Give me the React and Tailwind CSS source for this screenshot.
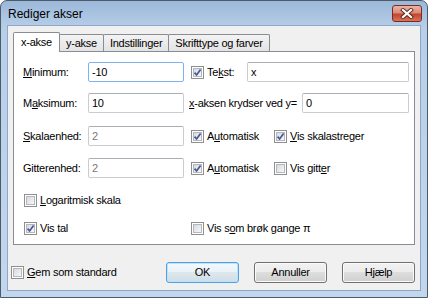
const Check = ({ checked }) => (
  <span className="relative flex w-[13px] h-[13px] shrink-0 border border-[#8f8f8f] bg-white p-px">
    <span className="flex-1 border border-[#b4b8be] bg-[linear-gradient(135deg,#d6d9dd,#f8f8f8)]" />
    {checked && (
      <svg className="absolute left-[1px] top-[1px]" width="9" height="9" viewBox="0 0 9 9">
        <path d="M1.6 4.6 L3.6 7 L7.6 1.6" stroke="#44579a" strokeWidth="1.7" fill="none" />
      </svg>
    )}
  </span>
)

const Field = ({ className, value, focus, disabled }) => (
  <div
    className={`h-[20px] flex items-center pl-[3px] rounded-[2px] border bg-white ${
      focus ? 'border-[#7eb4ea]' : 'border-[#c9ccd1] border-t-[#abadb3]'
    } ${disabled ? 'text-[#7a7a7a]' : 'text-black'} ${className}`}
  >
    {value}
  </div>
)

const Button = ({ children, primary }) => (
  <button
    className={`w-[73px] h-[21px] rounded-[3px] border text-black ${
      primary
        ? 'border-[#4ea0e6] shadow-[inset_0_0_0_1px_#bfe3f8] bg-[linear-gradient(to_bottom,#f4f9fc,#eaf2f7_50%,#dde8ee_50%,#d0dde5)]'
        : 'border-[#707070] shadow-[inset_0_0_0_1px_#fbfbfb] bg-[linear-gradient(to_bottom,#f2f2f2,#ebebeb_50%,#dddddd_50%,#cfcfcf)]'
    }`}
  >
    {children}
  </button>
)

const Tab = ({ children, active }) =>
  active ? (
    <div className="relative z-10 -mb-px h-[20px] w-[47px] flex items-center justify-center border border-b-0 border-[#898c95] bg-white rounded-t-[2px]">
      {children}
    </div>
  ) : (
    <div className="h-[17px] -ml-px flex items-center px-[6px] border border-b-0 border-[#898c95] bg-[linear-gradient(to_bottom,#f3f3f3,#e3e3e3)] rounded-t-[2px]">
      {children}
    </div>
  )

export default function App() {
  return (
    <div className="w-[428px] h-[298px] flex flex-col rounded-t-[7px] border border-[#4d5a68] bg-[linear-gradient(to_bottom,#9bb8d9,#b8cfe9_28px,#c2d7ee)] font-['Liberation_Sans',Arial,sans-serif] text-[11px] tracking-[-0.25px] text-black">
      {/* title bar */}
      <div className="h-[25px] flex items-start pl-[7px] pr-[5px]">
        <span className="mt-[5px] text-[12px] tracking-normal leading-[16px]">Rediger akser</span>
        <div className="ml-auto mt-[4px] w-[30px] h-[17px] flex items-center justify-center rounded-[3px] border border-[#7a2c22] bg-[linear-gradient(to_bottom,#eab4a6,#d98b78_45%,#c5452d_55%,#d8735a)]">
          <svg width="14" height="11" viewBox="0 0 14 11">
            <path d="M3 2 L11 9 M11 2 L3 9" stroke="#5b2a22" strokeWidth="4" strokeLinecap="square" />
            <path d="M3 2 L11 9 M11 2 L3 9" stroke="#ffffff" strokeWidth="2.2" strokeLinecap="square" />
          </svg>
        </div>
      </div>

      {/* client area */}
      <div className="mx-[7px] h-[264px] flex flex-col bg-[#f0f0f0] shadow-[0_0_0_1px_#8ea7c4]">
        <div className="px-[5px] pt-[6px]">
          <div className="flex items-end">
            <Tab active>x-akse</Tab>
            <Tab>y-akse</Tab>
            <Tab>Indstillinger</Tab>
            <Tab>Skrifttype og farver</Tab>
          </div>
          <div className="h-[194px] border border-[#898c95] bg-white flex flex-col pl-[9px]">
            <div className="mt-[10px] h-[20px] flex items-center">
              <span className="w-[65px]"><u className="underline underline-offset-1">M</u>inimum:</span>
              <Field className="w-[96px]" value="-10" focus />
              <div className="ml-[7px] w-[56px] flex items-center">
                <Check checked />
                <span className="ml-[3px]">Te<u className="underline underline-offset-1">k</u>st:</span>
              </div>
              <Field className="w-[162px]" value="x" />
            </div>

            <div className="mt-[11px] h-[20px] flex items-center">
              <span className="w-[65px]">M<u className="underline underline-offset-1">a</u>ksimum:</span>
              <Field className="w-[96px]" value="10" />
              <span className="ml-[5px] w-[113px]"><u className="underline underline-offset-1">x</u>-aksen krydser ved y=</span>
              <Field className="w-[107px]" value="0" />
            </div>

            <div className="mt-[13px] h-[20px] flex items-center">
              <span className="w-[65px]"><u className="underline underline-offset-1">S</u>kalaenhed:</span>
              <Field className="w-[96px]" value="2" disabled />
              <div className="ml-[7px] w-[83px] flex items-center">
                <Check checked />
                <span className="ml-[3px]">A<u className="underline underline-offset-1">u</u>tomatisk</span>
              </div>
              <div className="flex items-center">
                <Check checked />
                <span className="ml-[3px]"><u className="underline underline-offset-1">V</u>is skalastreger</span>
              </div>
            </div>

            <div className="mt-[12px] h-[20px] flex items-center">
              <span className="w-[65px]">Gitterenhed:</span>
              <Field className="w-[96px]" value="2" disabled />
              <div className="ml-[7px] w-[83px] flex items-center">
                <Check checked />
                <span className="ml-[3px]">A<u className="underline underline-offset-1">u</u>tomatisk</span>
              </div>
              <div className="flex items-center">
                <Check />
                <span className="ml-[3px]">Vis gitt<u className="underline underline-offset-1">e</u>r</span>
              </div>
            </div>

            <div className="mt-[12px] h-[20px] flex items-center pl-px">
              <Check />
              <span className="ml-[3px]"><u className="underline underline-offset-1">L</u>ogaritmisk skala</span>
            </div>

            <div className="mt-[8px] h-[20px] flex items-center pl-px">
              <div className="w-[167px] flex items-center">
                <Check checked />
                <span className="ml-[3px]">Vis tal</span>
              </div>
              <Check />
              <span className="ml-[3px]">Vis s<u className="underline underline-offset-1">o</u>m brøk gange π</span>
            </div>
          </div>
        </div>

        <div className="mt-[17px] h-[21px] flex items-center pl-[3px] pr-[5px]">
          <Check />
          <span className="ml-[3px]"><u className="underline underline-offset-1">G</u>em som standard</span>
          <div className="ml-auto flex gap-[15px]">
            <Button primary>OK</Button>
            <Button>Annuller</Button>
            <Button>Hjælp</Button>
          </div>
        </div>
      </div>
    </div>
  )
}
